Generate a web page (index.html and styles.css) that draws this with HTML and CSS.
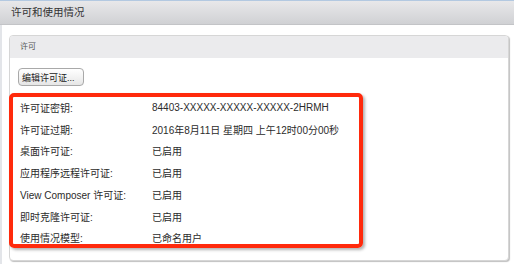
FILE: index.html
```html
<!DOCTYPE html>
<html lang="zh-CN">
<head>
  <meta charset="UTF-8" />
  <meta name="viewport" content="width=device-width, initial-scale=1.0"/>
  <title>许可和使用情况</title>
  <link rel="stylesheet" href="styles.css">
</head>
<body>
  <div class="page-header">许可和使用情况</div>
  <div class="page-body">
    <div class="panel">
      <div class="panel-title">许可</div>
      <div class="panel-content">
        <button type="button" class="edit-btn">编辑许可证...</button>
        <div class="info">
          <div class="highlight"></div>
          <div class="label">许可证密钥:</div>
          <div class="value">84403-XXXXX-XXXXX-XXXXX-2HRMH</div>
          <div class="label">许可证过期:</div>
          <div class="value">2016年8月11日 星期四 上午12时00分00秒</div>
          <div class="label">桌面许可证:</div>
          <div class="value">已启用</div>
          <div class="label">应用程序远程许可证:</div>
          <div class="value">已启用</div>
          <div class="label">View Composer 许可证:</div>
          <div class="value">已启用</div>
          <div class="label">即时克隆许可证:</div>
          <div class="value">已启用</div>
          <div class="label">使用情况模型:</div>
          <div class="value">已命名用户</div>
        </div>
      </div>
    </div>
  </div>
</body>
</html>
```

FILE: styles.css
```css
body {
  margin: 0;
  font-family: 'Liberation Sans', 'Noto Sans CJK SC', sans-serif;
  background: #fff;
  color: #333;
  overflow: hidden;
}

.page-header {
  height: 23px;
  line-height: 23px;
  padding-left: 11px;
  font-size: 10.5px;
  color: #333;
  border-top: 1px solid #b3c9e1;
  border-bottom: 1px solid #c3c4c7;
  background: linear-gradient(#e8e8ea, #d0d1d4);
}

.page-body {
  padding: 10px 5px 0 7px;
  border-left: 2px solid #e3e5e9;
  height: 240px;
  box-sizing: border-box;
}

.panel {
  border: 1px solid #d6d6d6;
  border-radius: 4px;
  box-shadow: 1px 1px 1px rgba(0,0,0,0.25);
  height: 226px;
  box-sizing: border-box;
  background: #fff;
}

.panel-title {
  height: 22px;
  line-height: 22px;
  padding-left: 10px;
  font-size: 8px;
  color: #555;
  background: #ebebed;
  border-radius: 3px 3px 0 0;
}

.panel-content {
  padding: 10px 0 0 8px;
}

.edit-btn {
  display: block;
  width: 66px;
  height: 18px;
  padding: 0 0 0 3px;
  text-align: left;
  font-family: inherit;
  font-size: 9px;
  color: #222;
  border: 1px solid #a9a9a9;
  border-radius: 4px;
  background: linear-gradient(#ffffff, #e6e6e6);
}

.info {
  position: relative;
  display: grid;
  grid-template-columns: 132px 1fr;
  grid-auto-rows: 21.75px;
  align-items: center;
  margin: 10.5px 0 0 2px;
  font-size: 10px;
  color: #2b2b2b;
}

.highlight {
  position: absolute;
  left: -11px;
  top: -3.5px;
  width: 354px;
  height: 155px;
  box-sizing: border-box;
  border: 4px solid #ff2a0c;
  border-radius: 5px;
  box-shadow: 2px 2px 3px rgba(0,0,0,0.3);
}
```
